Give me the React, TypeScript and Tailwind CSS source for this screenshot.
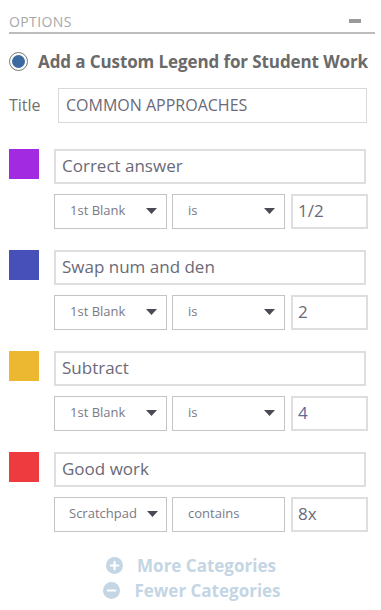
import { Plus, Minus } from 'lucide-react'

type Rule = {
  color: string
  label: string
  field: string
  op: string
  opSelect: boolean
  value: string
  valueBlue?: boolean
}

const rules: Rule[] = [
  { color: 'bg-[#a22ae0]', label: 'Correct answer', field: '1st Blank', op: 'is', opSelect: true, value: '1/2' },
  { color: 'bg-[#4650b8]', label: 'Swap num and den', field: '1st Blank', op: 'is', opSelect: true, value: '2' },
  { color: 'bg-[#ecb831]', label: 'Subtract', field: '1st Blank', op: 'is', opSelect: true, value: '4', valueBlue: true },
  { color: 'bg-[#ee3b3f]', label: 'Good work', field: 'Scratchpad', op: 'contains', opSelect: false, value: '8x' },
]

function Caret() {
  return (
    <svg width="11" height="6" viewBox="0 0 11 6" className="shrink-0">
      <path d="M0 0 L11 0 L5.5 6 Z" fill="#4a4a55" />
    </svg>
  )
}

function SelectBox({ text, caret, tight }: { text: string; caret: boolean; tight?: boolean }) {
  return (
    <div
      className={`flex h-[35px] w-[113px] items-center justify-between border border-[#c4c4c4] bg-white ${
        tight ? 'pl-[14px] pr-[8px]' : 'pl-[15px] pr-[9px]'
      } text-[13px] text-[#7a7a86]`}
    >
      <span>{text}</span>
      {caret && <Caret />}
    </div>
  )
}

export default function App() {
  return (
    <div className="h-[610px] w-[381px] overflow-hidden bg-white font-['Open_Sans',sans-serif]">
      <div className="pl-[9px] pr-[6px] pt-[11px]">
        <div className="flex h-[23px] items-center justify-between border-b-2 border-[#bdbdbd] pb-[1px]">
          <span className="text-[14px] tracking-[0.4px] text-[#a8a8a8]">OPTIONS</span>
          <div className="mr-[14px] h-[4px] w-[12px] bg-[#9a9a9a]" />
        </div>

        <div className="mt-[15px] flex items-center gap-[10px]">
          <div className="flex h-[19px] w-[19px] items-center justify-center rounded-full border border-[#777] bg-white">
            <div className="h-[13px] w-[13px] rounded-full bg-[#3a6aa0]" />
          </div>
          <span className="text-[17px] font-bold tracking-[-0.1px] text-[#6a6a6a]">
            Add a Custom Legend for Student Work
          </span>
        </div>

        <div className="mt-[13px] flex items-center">
          <span className="w-[49px] text-[16px] text-[#707070]">Title</span>
          <div className="flex h-[35px] w-[309px] items-center border border-[#d9d9d9] px-[7px] text-[16px] text-[#6a6a78]">
            COMMON APPROACHES
          </div>
        </div>

        <div className="mt-[26px] flex flex-col gap-[21px]">
          {rules.map((r) => (
            <div key={r.label} className="flex gap-[15px]">
              <div className={`h-[30px] w-[30px] shrink-0 ${r.color}`} />
              <div className="flex flex-col gap-[10px]">
                <div className="flex h-[35px] w-[312px] items-center border-2 border-[#dedede] px-[6px] text-[17px] text-[#6a6a78]">
                  {r.label}
                </div>
                <div className="flex gap-[5px]">
                  <SelectBox text={r.field} caret tight={r.field === 'Scratchpad'} />
                  <SelectBox text={r.op} caret={r.opSelect} />
                  <div
                    className={`ml-[1px] flex h-[35px] w-[77px] items-center border-2 border-[#dedede] px-[5px] text-[17px] ${
                      r.valueBlue ? 'text-[#5a6a9a]' : 'text-[#6a6a78]'
                    }`}
                  >
                    {r.value}
                  </div>
                </div>
              </div>
            </div>
          ))}
        </div>

        <div className="mt-[21px] flex flex-col items-center text-[17px] font-bold leading-[25px] text-[#c4d5e3]">
          <div className="flex items-center gap-[14px] pr-[2px]">
            <span className="flex h-[17px] w-[17px] items-center justify-center rounded-full bg-[#c4d5e3]">
              <Plus size={13} strokeWidth={4} color="white" />
            </span>
            <span>More Categories</span>
          </div>
          <div className="flex items-center gap-[14px]">
            <span className="flex h-[17px] w-[17px] items-center justify-center rounded-full bg-[#c4d5e3]">
              <Minus size={13} strokeWidth={4} color="white" />
            </span>
            <span>Fewer Categories</span>
          </div>
        </div>
      </div>
    </div>
  )
}
